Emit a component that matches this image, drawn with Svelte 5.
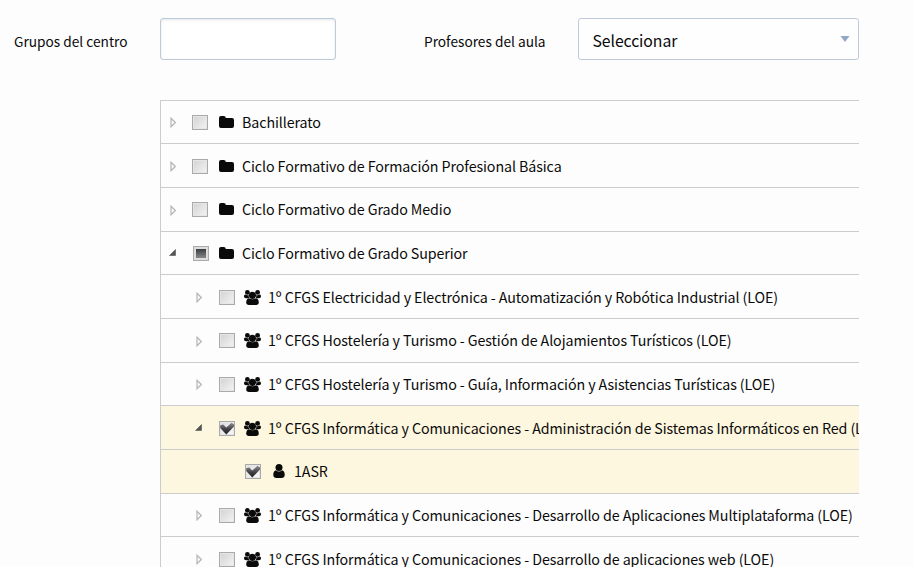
<script>
  const rows = [
    { level: 0, icon: 'folder', text: 'Bachillerato' },
    { level: 0, icon: 'folder', text: 'Ciclo Formativo de Formación Profesional Básica' },
    { level: 0, icon: 'folder', text: 'Ciclo Formativo de Grado Medio' },
    { level: 0, icon: 'folder', text: 'Ciclo Formativo de Grado Superior', open: true, state: 'partial' },
    { level: 1, icon: 'users', text: '1º CFGS Electricidad y Electrónica - Automatización y Robótica Industrial (LOE)' },
    { level: 1, icon: 'users', text: '1º CFGS Hostelería y Turismo - Gestión de Alojamientos Turísticos (LOE)' },
    { level: 1, icon: 'users', text: '1º CFGS Hostelería y Turismo - Guía, Información y Asistencias Turísticas (LOE)' },
    { level: 1, icon: 'users', text: '1º CFGS Informática y Comunicaciones - Administración de Sistemas Informáticos en Red (LOE)', open: true, state: 'checked', selected: true },
    { level: 2, icon: 'user', text: '1ASR', leaf: true, state: 'checked', selected: true },
    { level: 1, icon: 'users', text: '1º CFGS Informática y Comunicaciones - Desarrollo de Aplicaciones Multiplataforma (LOE)' },
    { level: 1, icon: 'users', text: '1º CFGS Informática y Comunicaciones - Desarrollo de aplicaciones web (LOE)' }
  ];
</script>

<main>
  <div class="form">
    <label class="name" for="groups">Grupos del centro</label>
    <input id="groups" type="text" />
    <span class="name second">Profesores del aula</span>
    <div class="select">
      <span>Seleccionar</span>
      <svg width="10" height="6" viewBox="0 0 10 6"><path d="M0.5 0H9.5L5 6Z" fill="#91a8c2" /></svg>
    </div>
  </div>

  <div class="tree">
    {#each rows as row}
      <div class="row level{row.level}" class:selected={row.selected}>
        <span class="arrow">
          {#if row.open}
            <svg class="opened" width="8" height="8" viewBox="0 0 8 8"><path d="M6.500 0.5V6.500H0.5Z" fill="#555" stroke="#444" stroke-width=".5" /></svg>
          {:else if !row.leaf}
            <svg class="closed" width="7" height="11" viewBox="0 0 7 11"><path d="M1 1.2V9.8L5.4 5.5Z" fill="#fafafa" stroke="#b5b5b5" stroke-width="1.2" /></svg>
          {/if}
        </span>
        <span class="box {row.state ?? 'empty'}">
          {#if row.state === 'checked'}
            <svg width="16" height="15" viewBox="0 0 16 15">
              <defs>
                <linearGradient id="tick{row.level}" x2="0" y2="1">
                  <stop offset="0" stop-color="#8b8b91" />
                  <stop offset=".6" stop-color="#3c3c40" />
                  <stop offset="1" stop-color="#222" />
                </linearGradient>
              </defs>
              <path d="M1.2 4.2L4.2 3.4L7.3 6.600L12.5 1.800L15 3.600V5.5L7.3 13.400L1.2 7Z" fill="url(#tick{row.level})" />
            </svg>
          {/if}
        </span>
        <span class="icon">
          {#if row.icon === 'folder'}
            <svg width="15" height="12" viewBox="0 0 15 12"><path d="M0 2Q0 0 2 0H4.8Q6.8 0 6.8 2H13Q15 2 15 4V10Q15 12 13 12H2Q0 12 0 10Z" /></svg>
          {:else if row.icon === 'users'}
            <svg width="17" height="15" viewBox="0 0 17 15">
              <circle cx="3.400" cy="2.400" r="2.400" />
              <circle cx="13.600" cy="2.400" r="2.400" />
              <path d="M1.300 4.600Q3.300 5.700 4.700 4.900Q4.400 6.800 5.400 8.200H2Q0 8.200 0 6.600Q0 4.400 1.300 4.600Z" />
              <path d="M15.700 4.600Q13.700 5.700 12.300 4.900Q12.600 6.800 11.600 8.200H15Q17 8.200 17 6.600Q17 4.400 15.700 4.600Z" />
              <circle cx="8.500" cy="5.300" r="3.600" />
              <path d="M5 8.200Q8.500 10.300 12 8.200Q14.800 8.700 14.800 12.600Q14.800 15 12 15H5Q2.200 15 2.200 12.600Q2.200 8.700 5 8.200Z" />
            </svg>
          {:else}
            <svg class="user" width="12" height="14" viewBox="0 0 12 14"><path d="M2.8 6.2Q0 7.200 .3 11.600Q.5 14 3 14H9Q11.500 14 11.700 11.600Q12 7.200 9.200 6.200Q6 8.800 2.800 6.200Z" /><circle cx="6" cy="3.500" r="3.500" /></svg>
          {/if}
        </span>
        <span class="text">{row.text}</span>
      </div>
    {/each}
  </div>
</main>

<style>
  :global(body) {
    margin: 0;
    overflow: hidden;
    background: #fdfdfd;
  }
  main {
    box-sizing: border-box;
    width: 914px;
    height: 567px;
    overflow: hidden;
    padding-top: 18px;
    background: #fdfdfd;
    color: #0a0a0a;
    font: 14.25px/24px "Noto Sans CJK SC", "Source Sans Pro", sans-serif;
    letter-spacing: -0.09px;
  }
  .form {
    display: flex;
    height: 82px;
    align-items: flex-start;
  }
  .name {
    width: 146px;
    box-sizing: border-box;
    padding: 11px 0 0 14px;
    margin-right: 14px;
    font-size: 13.7px;
    letter-spacing: 0;
    line-height: 24px;
    white-space: nowrap;
  }
  .name.second {
    width: 140px;
    margin: 0 14px 0 88px;
    padding-left: 0;
  }
  input {
    box-sizing: border-box;
    width: 176px;
    height: 42px;
    border: 1px solid #bccadb;
    border-radius: 3px;
    background: #fff;
    box-shadow: inset 0 1px 3px #0000001a;
    outline: none;
  }
  .select {
    box-sizing: border-box;
    display: flex;
    justify-content: space-between;
    width: 281px;
    height: 42px;
    padding: 9px 8px 0 13.5px;
    border: 1px solid #bccadb;
    border-radius: 3px;
    background: #fefefe;
    font-size: 15.8px;
    line-height: 26px;
  }
  .select svg {
    margin-top: 8px;
  }
  .tree {
    width: 699px;
    height: 468px;
    box-sizing: border-box;
    margin: -0.3px 0 0 160px;
    overflow: hidden;
    border-left: 1px solid #ccc;
  }
  .row {
    box-sizing: border-box;
    display: flex;
    height: 43.667px;
    border-top: 1px solid #ccc;
    padding-left: 8px;
    white-space: nowrap;
  }
  .level1 { padding-left: 34px; }
  .level2 { padding-left: 60px; }
  .selected { background: #fef7df; }
  svg { display: block; }
  .arrow {
    width: 23px;
    flex: none;
    padding-top: 16.6px;
  }
  .level1 .arrow, .level2 .arrow { width: 24px; }
  .arrow .closed { margin-left: 1px; }
  .arrow .opened { margin-top: 0.7px; }
  .box {
    box-sizing: border-box;
    flex: none;
    width: 16px;
    height: 15px;
    margin-top: 14.3px;
    border: 1px solid #aaa;
    background: linear-gradient(135deg, #d2d2d2, #f4f4f4);
    box-shadow: inset 0 0 0 1px #e6e6e6;
  }
  .box svg { margin: -1px; }
  .checked { background: linear-gradient(135deg, #dcdcdf, #fafafa); }
  .partial {
    position: relative;
    left: 1px;
    background: linear-gradient(#3a3d40, #85898c) 2px 2px / 10px 9px no-repeat, #ddd;
    box-shadow: none;
  }
  .icon {
    flex: none;
    width: 23px;
    margin-left: 11px;
    padding-top: 15.3px;
    fill: #0a0a0a;
  }
  .level1 .icon {
    width: 24px;
    margin-left: 9px;
    padding-top: 14.3px;
  }
  .level2 .icon {
    margin-left: 12px;
    padding-top: 14.3px;
    width: 21px;
  }
  .text { padding-top: 9.3px; }
</style>
